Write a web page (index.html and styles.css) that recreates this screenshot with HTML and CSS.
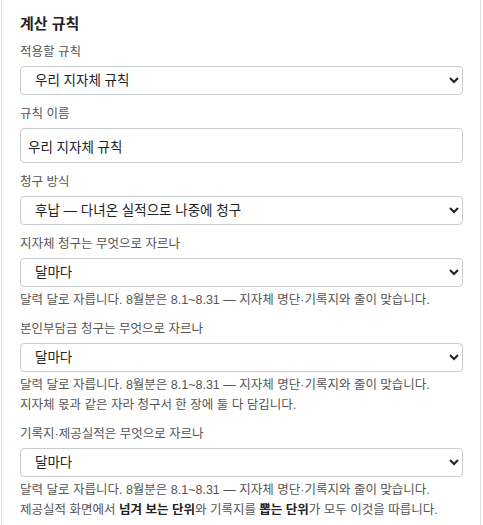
FILE: index.html
```html
<!DOCTYPE html>
<html lang="ko">
<head>
<meta charset="utf-8">
<link rel="stylesheet" href="styles.css">
</head>
<body>
<section class="card">
  <h2 class="title">계산 규칙</h2>

  <div class="field">
    <label class="label">적용할 규칙</label>
    <select class="select"><option>우리 지자체 규칙</option></select>
  </div>

  <div class="field">
    <label class="label">규칙 이름</label>
    <input class="input" type="text" value="우리 지자체 규칙">
  </div>

  <div class="field">
    <label class="label">청구 방식</label>
    <select class="select"><option>후납 — 다녀온 실적으로 나중에 청구</option></select>
  </div>

  <div class="field">
    <label class="label">지자체 청구는 무엇으로 자르나</label>
    <select class="select"><option>달마다</option></select>
    <p class="help">달력 달로 자릅니다. 8월분은 8.1~8.31 — 지자체 명단·기록지와 줄이 맞습니다.</p>
  </div>

  <div class="field">
    <label class="label">본인부담금 청구는 무엇으로 자르나</label>
    <select class="select"><option>달마다</option></select>
    <p class="help">달력 달로 자릅니다. 8월분은 8.1~8.31 — 지자체 명단·기록지와 줄이 맞습니다.<br>지자체 몫과 같은 자라 청구서 한 장에 둘 다 담깁니다.</p>
  </div>

  <div class="field">
    <label class="label">기록지·제공실적은 무엇으로 자르나</label>
    <select class="select"><option>달마다</option></select>
    <p class="help">달력 달로 자릅니다. 8월분은 8.1~8.31 — 지자체 명단·기록지와 줄이 맞습니다.<br>제공실적 화면에서 <b>넘겨 보는 단위</b>와 기록지를 <b>뽑는 단위</b>가 모두 이것을 따릅니다.</p>
  </div>
</section>
</body>
</html>
```

FILE: styles.css
```css
html, body {
  margin: 0;
  padding: 0;
  background: #fff;
}
body {
  font-family: "Liberation Sans", "Noto Sans CJK KR", sans-serif;
  color: #222;
}
.card {
  margin: -1px 0 0 1px;
  width: 480px;
  box-sizing: border-box;
  border: 1px solid #dde0e2;
  padding: 14px 17px 20px 18px;
}
.title {
  margin: 0 0 9px;
  font-size: 15px;
  line-height: 20px;
  font-weight: 700;
  color: #222;
}
.field {
  margin-bottom: 10px;
}
.label {
  display: block;
  font-size: 12.5px;
  line-height: 18px;
  color: #555;
  margin-bottom: 5px;
}
.select {
  display: block;
  width: 100%;
  height: 29px;
  box-sizing: border-box;
  border: 1px solid #c9cdd0;
  border-radius: 4px;
  background: #fff;
  padding: 0 8px 0 10px;
  font-family: inherit;
  font-size: 13.5px;
  color: #222;
}
.input {
  display: block;
  width: 100%;
  height: 35px;
  box-sizing: border-box;
  border: 1px solid #c9cdd0;
  border-radius: 4px;
  background: #fff;
  padding: 0 7px;
  font-family: inherit;
  font-size: 13.5px;
  color: #222;
}
.help {
  margin: 3px 0 0;
  font-size: 12.5px;
  line-height: 20px;
  color: #555;
}
.help b {
  color: #222;
  font-weight: 700;
}
```
